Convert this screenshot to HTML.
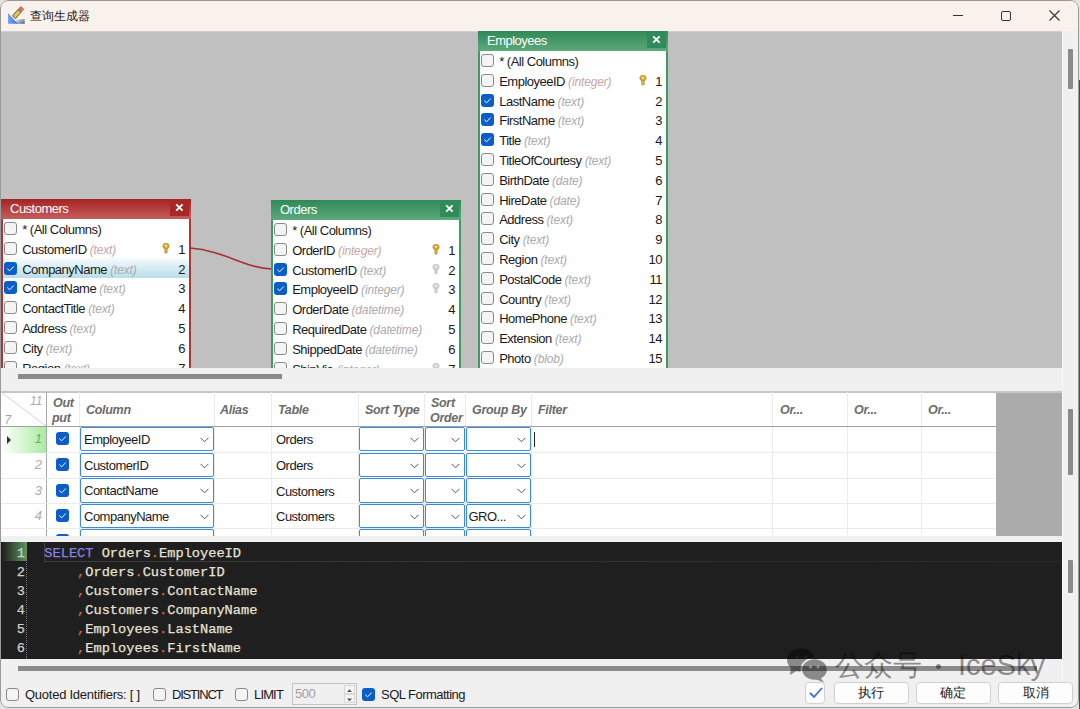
<!DOCTYPE html><html><head><meta charset="utf-8"><style>
*{margin:0;padding:0;box-sizing:border-box}
html,body{width:1080px;height:709px;overflow:hidden;background:#e4e4e4}
body{position:relative;font-family:"Liberation Sans", sans-serif;font-size:13px;letter-spacing:-0.5px;color:#1a1a1a}
.a{position:absolute}
.win{position:absolute;left:0;top:0;width:1079px;height:708px;background:#f0f0f0;border-radius:8px;overflow:hidden}
.wb{position:absolute;left:0;top:0;width:1079px;height:708px;border:1px solid #9a9a9a;border-radius:8px;pointer-events:none}
.title{position:absolute;left:0;top:0;width:1079px;height:31px;background:#f9f1eb}
.canvas{position:absolute;left:1px;top:31px;width:1061px;height:337px;background:#c0c0c0;overflow:hidden}
.tbl{position:absolute;width:190px;background:#fff;border:2px solid;border-top:none}
.th{position:absolute;left:0;top:0;right:0;height:19.5px;color:#fff;font-size:13px;line-height:20px;padding-left:9px}
.cls{position:absolute;right:0;top:0;width:19px;height:17px}
.row{position:absolute;left:0;right:0;height:19.8px;line-height:19.8px;white-space:nowrap}
.cb{position:absolute;width:13px;height:13px;border:1px solid #8a8a8a;border-radius:3px;background:#f4f4f4}
.cbk{position:absolute;width:13px;height:13px;border-radius:3px;background:#0b5ec8}
.ty{font-style:italic;color:#ababab;font-size:12px;letter-spacing:-0.15px}
.tyk{font-style:italic;color:#caa5a5;font-size:12px;letter-spacing:-0.15px}
.num{position:absolute;right:4px;top:0;text-align:right}
.key{position:absolute;top:5px;width:7px;height:11px}
.gh{position:absolute;font-weight:bold;font-style:italic;color:#6b6b6b;font-size:12.5px;letter-spacing:-0.3px}
.combo{position:absolute;border:1.5px solid #3d8ad6;border-radius:2px;background:#fff;height:24.5px}
.chev{position:absolute;right:4px;top:9px;width:9px;height:6px}
.gt{position:absolute;line-height:25px}
.code{position:absolute;font-family:"Liberation Mono", monospace;font-size:13.67px;letter-spacing:0;white-space:pre;line-height:19px;color:#e6e1d6;-webkit-text-stroke:0.25px currentColor}
.btn{position:absolute;top:682px;height:21.5px;background:#fdfdfd;border:1px solid #d0d0d0;border-radius:4px;text-align:center;line-height:20px;font-size:13px;letter-spacing:0;color:#1a1a1a}
</style></head><body><div class="win"><div class="title"><svg class="a" style="left:0;top:0" width="30" height="30" viewBox="0 0 30 30"><defs><linearGradient id="rg" x1="0" x2="1" y1="0" y2="1"><stop offset="0" stop-color="#f4f4f6"/><stop offset="1" stop-color="#4a5870"/></linearGradient><linearGradient id="bg1" x1="0" x2="1"><stop offset="0" stop-color="#7aa4f4"/><stop offset="1" stop-color="#3a70e0"/></linearGradient></defs><rect x="16" y="19" width="8.7" height="4.8" fill="url(#rg)"/><path d="M8 13 L8 23.8 L17.8 23.8 Z" fill="url(#bg1)"/><path d="M15.5 18.5 L12.5 15.9 L18.07 9.49 L21.09 12.13 Z" fill="#dcc860" stroke="#5a4a18" stroke-width="0.9" stroke-linejoin="round"/><path d="M18.07 9.49 L20.7 6.5 L23.7 9.1 L21.09 12.13 Z" fill="#d8735e" stroke="#8a4a3a" stroke-width="0.6"/></svg><div class="a" style="left:30px;top:7.5px;font-size:12.2px;letter-spacing:0;color:#1a1a1a">查询生成器</div><div class="a" style="left:953px;top:15px;width:10px;height:1px;background:#333"></div><div class="a" style="left:1001px;top:11px;width:10px;height:10px;border:1px solid #333;border-radius:2px"></div><svg class="a" style="left:1049px;top:10px" width="11" height="11" viewBox="0 0 11 11"><path d="M0.5 0.5 L10.5 10.5 M10.5 0.5 L0.5 10.5" stroke="#333" stroke-width="1.1"/></svg></div><div class="canvas"><div class="a" style="left:0;top:0;width:1061px;height:1px;background:#d2d0ce"></div><svg class="a" style="left:0;top:0" width="1061" height="337"><path d="M189 217 C 225 220, 240 236, 271 238" fill="none" stroke="#a83030" stroke-width="1.6"/></svg><div class="tbl" style="left:0px;top:168px;height:200px;border-color:#b13434"><div class="th" style="background:linear-gradient(#a62222,#c45e5e);left:-2px;right:-2px">Customers<div class="cls" style="background:#a82828;right:2px"><svg width="19" height="17" style="position:absolute;left:0;top:0"><path d="M6.2 5.3 L12.6 11.7 M12.6 5.3 L6.2 11.7" stroke="#fff" stroke-width="1.9"/></svg></div></div><div class="row" style="top:19.5px;"><div class="cb" style="left:0.5px;top:3.5px"></div><div class="a" style="left:19.2px;top:1.5px">* (All Columns)</div></div><div class="row" style="top:39.3px;"><div class="cb" style="left:0.5px;top:3.5px"></div><div class="a" style="left:19.2px;top:1.5px">CustomerID <span class="tyk">(text)</span></div><svg class="a" style="left:159.2px;top:4.6px" width="8" height="11" viewBox="0 0 8 11"><ellipse cx="4" cy="3" rx="3.2" ry="2.8" fill="#d9b23e" stroke="#a8801c" stroke-width="0.6"/><ellipse cx="4" cy="2.7" rx="1.1" ry="1" fill="#f2e2a0"/><path d="M2.7 5.4 L5.3 5.4 L5.3 9.6 L4 10.4 L2.7 9.6 Z" fill="#d9b23e" stroke="#a8801c" stroke-width="0.5"/></svg><div class="num" style="top:1.5px">1</div></div><div class="row" style="top:59.1px;background:linear-gradient(#f6fbfd,#b9dde9);"><div class="cbk" style="left:0.5px;top:3.5px"><svg width="13" height="13" viewBox="0 0 13 13" style="position:absolute;left:0;top:0"><path d="M3.3 6.6 L5.6 8.8 L9.7 4.5" fill="none" stroke="#fff" stroke-width="1"/></svg></div><div class="a" style="left:19.2px;top:1.5px">CompanyName <span class="ty">(text)</span></div><div class="num" style="top:1.5px">2</div></div><div class="row" style="top:78.9px;"><div class="cbk" style="left:0.5px;top:3.5px"><svg width="13" height="13" viewBox="0 0 13 13" style="position:absolute;left:0;top:0"><path d="M3.3 6.6 L5.6 8.8 L9.7 4.5" fill="none" stroke="#fff" stroke-width="1"/></svg></div><div class="a" style="left:19.2px;top:1.5px">ContactName <span class="ty">(text)</span></div><div class="num" style="top:1.5px">3</div></div><div class="row" style="top:98.7px;"><div class="cb" style="left:0.5px;top:3.5px"></div><div class="a" style="left:19.2px;top:1.5px">ContactTitle <span class="ty">(text)</span></div><div class="num" style="top:1.5px">4</div></div><div class="row" style="top:118.5px;"><div class="cb" style="left:0.5px;top:3.5px"></div><div class="a" style="left:19.2px;top:1.5px">Address <span class="ty">(text)</span></div><div class="num" style="top:1.5px">5</div></div><div class="row" style="top:138.3px;"><div class="cb" style="left:0.5px;top:3.5px"></div><div class="a" style="left:19.2px;top:1.5px">City <span class="ty">(text)</span></div><div class="num" style="top:1.5px">6</div></div><div class="row" style="top:158.1px;"><div class="cb" style="left:0.5px;top:3.5px"></div><div class="a" style="left:19.2px;top:1.5px">Region <span class="ty">(text)</span></div><div class="num" style="top:1.5px">7</div></div></div><div class="tbl" style="left:270px;top:169px;height:200px;border-color:#3f9a63"><div class="th" style="background:linear-gradient(#2f8a56,#5da97c);left:-2px;right:-2px">Orders<div class="cls" style="background:#2f8b58;right:2px"><svg width="19" height="17" style="position:absolute;left:0;top:0"><path d="M6.2 5.3 L12.6 11.7 M12.6 5.3 L6.2 11.7" stroke="#fff" stroke-width="1.9"/></svg></div></div><div class="row" style="top:19.5px;"><div class="cb" style="left:0.5px;top:3.5px"></div><div class="a" style="left:19.2px;top:1.5px">* (All Columns)</div></div><div class="row" style="top:39.3px;"><div class="cb" style="left:0.5px;top:3.5px"></div><div class="a" style="left:19.2px;top:1.5px">OrderID <span class="tyk">(integer)</span></div><svg class="a" style="left:159.2px;top:4.6px" width="8" height="11" viewBox="0 0 8 11"><ellipse cx="4" cy="3" rx="3.2" ry="2.8" fill="#d9b23e" stroke="#a8801c" stroke-width="0.6"/><ellipse cx="4" cy="2.7" rx="1.1" ry="1" fill="#f2e2a0"/><path d="M2.7 5.4 L5.3 5.4 L5.3 9.6 L4 10.4 L2.7 9.6 Z" fill="#d9b23e" stroke="#a8801c" stroke-width="0.5"/></svg><div class="num" style="top:1.5px">1</div></div><div class="row" style="top:59.1px;"><div class="cbk" style="left:0.5px;top:3.5px"><svg width="13" height="13" viewBox="0 0 13 13" style="position:absolute;left:0;top:0"><path d="M3.3 6.6 L5.6 8.8 L9.7 4.5" fill="none" stroke="#fff" stroke-width="1"/></svg></div><div class="a" style="left:19.2px;top:1.5px">CustomerID <span class="ty">(text)</span></div><svg class="a" style="left:159.2px;top:4.6px" width="8" height="11" viewBox="0 0 8 11"><ellipse cx="4" cy="3" rx="3.2" ry="2.8" fill="#d4d4d4" stroke="#bdbdbd" stroke-width="0.6"/><ellipse cx="4" cy="2.7" rx="1.1" ry="1" fill="#f0f0f0"/><path d="M2.7 5.4 L5.3 5.4 L5.3 9.6 L4 10.4 L2.7 9.6 Z" fill="#d4d4d4" stroke="#bdbdbd" stroke-width="0.5"/></svg><div class="num" style="top:1.5px">2</div></div><div class="row" style="top:78.9px;"><div class="cbk" style="left:0.5px;top:3.5px"><svg width="13" height="13" viewBox="0 0 13 13" style="position:absolute;left:0;top:0"><path d="M3.3 6.6 L5.6 8.8 L9.7 4.5" fill="none" stroke="#fff" stroke-width="1"/></svg></div><div class="a" style="left:19.2px;top:1.5px">EmployeeID <span class="ty">(integer)</span></div><svg class="a" style="left:159.2px;top:4.6px" width="8" height="11" viewBox="0 0 8 11"><ellipse cx="4" cy="3" rx="3.2" ry="2.8" fill="#d4d4d4" stroke="#bdbdbd" stroke-width="0.6"/><ellipse cx="4" cy="2.7" rx="1.1" ry="1" fill="#f0f0f0"/><path d="M2.7 5.4 L5.3 5.4 L5.3 9.6 L4 10.4 L2.7 9.6 Z" fill="#d4d4d4" stroke="#bdbdbd" stroke-width="0.5"/></svg><div class="num" style="top:1.5px">3</div></div><div class="row" style="top:98.7px;"><div class="cb" style="left:0.5px;top:3.5px"></div><div class="a" style="left:19.2px;top:1.5px">OrderDate <span class="ty">(datetime)</span></div><div class="num" style="top:1.5px">4</div></div><div class="row" style="top:118.5px;"><div class="cb" style="left:0.5px;top:3.5px"></div><div class="a" style="left:19.2px;top:1.5px">RequiredDate <span class="ty">(datetime)</span></div><div class="num" style="top:1.5px">5</div></div><div class="row" style="top:138.3px;"><div class="cb" style="left:0.5px;top:3.5px"></div><div class="a" style="left:19.2px;top:1.5px">ShippedDate <span class="ty">(datetime)</span></div><div class="num" style="top:1.5px">6</div></div><div class="row" style="top:158.1px;"><div class="cb" style="left:0.5px;top:3.5px"></div><div class="a" style="left:19.2px;top:1.5px">ShipVia <span class="ty">(integer)</span></div><svg class="a" style="left:159.2px;top:4.6px" width="8" height="11" viewBox="0 0 8 11"><ellipse cx="4" cy="3" rx="3.2" ry="2.8" fill="#d4d4d4" stroke="#bdbdbd" stroke-width="0.6"/><ellipse cx="4" cy="2.7" rx="1.1" ry="1" fill="#f0f0f0"/><path d="M2.7 5.4 L5.3 5.4 L5.3 9.6 L4 10.4 L2.7 9.6 Z" fill="#d4d4d4" stroke="#bdbdbd" stroke-width="0.5"/></svg><div class="num" style="top:1.5px">7</div></div></div><div class="tbl" style="left:477px;top:0px;height:340px;border-color:#3f9a63"><div class="th" style="background:linear-gradient(#2f8a56,#5da97c);left:-2px;right:-2px">Employees<div class="cls" style="background:#2f8b58;right:2px"><svg width="19" height="17" style="position:absolute;left:0;top:0"><path d="M6.2 5.3 L12.6 11.7 M12.6 5.3 L6.2 11.7" stroke="#fff" stroke-width="1.9"/></svg></div></div><div class="row" style="top:19.5px;"><div class="cb" style="left:0.5px;top:3.5px"></div><div class="a" style="left:19.2px;top:1.5px">* (All Columns)</div></div><div class="row" style="top:39.3px;"><div class="cb" style="left:0.5px;top:3.5px"></div><div class="a" style="left:19.2px;top:1.5px">EmployeeID <span class="tyk">(integer)</span></div><svg class="a" style="left:159.2px;top:4.6px" width="8" height="11" viewBox="0 0 8 11"><ellipse cx="4" cy="3" rx="3.2" ry="2.8" fill="#d9b23e" stroke="#a8801c" stroke-width="0.6"/><ellipse cx="4" cy="2.7" rx="1.1" ry="1" fill="#f2e2a0"/><path d="M2.7 5.4 L5.3 5.4 L5.3 9.6 L4 10.4 L2.7 9.6 Z" fill="#d9b23e" stroke="#a8801c" stroke-width="0.5"/></svg><div class="num" style="top:1.5px">1</div></div><div class="row" style="top:59.1px;"><div class="cbk" style="left:0.5px;top:3.5px"><svg width="13" height="13" viewBox="0 0 13 13" style="position:absolute;left:0;top:0"><path d="M3.3 6.6 L5.6 8.8 L9.7 4.5" fill="none" stroke="#fff" stroke-width="1"/></svg></div><div class="a" style="left:19.2px;top:1.5px">LastName <span class="ty">(text)</span></div><div class="num" style="top:1.5px">2</div></div><div class="row" style="top:78.9px;"><div class="cbk" style="left:0.5px;top:3.5px"><svg width="13" height="13" viewBox="0 0 13 13" style="position:absolute;left:0;top:0"><path d="M3.3 6.6 L5.6 8.8 L9.7 4.5" fill="none" stroke="#fff" stroke-width="1"/></svg></div><div class="a" style="left:19.2px;top:1.5px">FirstName <span class="ty">(text)</span></div><div class="num" style="top:1.5px">3</div></div><div class="row" style="top:98.7px;"><div class="cbk" style="left:0.5px;top:3.5px"><svg width="13" height="13" viewBox="0 0 13 13" style="position:absolute;left:0;top:0"><path d="M3.3 6.6 L5.6 8.8 L9.7 4.5" fill="none" stroke="#fff" stroke-width="1"/></svg></div><div class="a" style="left:19.2px;top:1.5px">Title <span class="ty">(text)</span></div><div class="num" style="top:1.5px">4</div></div><div class="row" style="top:118.5px;"><div class="cb" style="left:0.5px;top:3.5px"></div><div class="a" style="left:19.2px;top:1.5px">TitleOfCourtesy <span class="ty">(text)</span></div><div class="num" style="top:1.5px">5</div></div><div class="row" style="top:138.3px;"><div class="cb" style="left:0.5px;top:3.5px"></div><div class="a" style="left:19.2px;top:1.5px">BirthDate <span class="ty">(date)</span></div><div class="num" style="top:1.5px">6</div></div><div class="row" style="top:158.1px;"><div class="cb" style="left:0.5px;top:3.5px"></div><div class="a" style="left:19.2px;top:1.5px">HireDate <span class="ty">(date)</span></div><div class="num" style="top:1.5px">7</div></div><div class="row" style="top:177.9px;"><div class="cb" style="left:0.5px;top:3.5px"></div><div class="a" style="left:19.2px;top:1.5px">Address <span class="ty">(text)</span></div><div class="num" style="top:1.5px">8</div></div><div class="row" style="top:197.70000000000002px;"><div class="cb" style="left:0.5px;top:3.5px"></div><div class="a" style="left:19.2px;top:1.5px">City <span class="ty">(text)</span></div><div class="num" style="top:1.5px">9</div></div><div class="row" style="top:217.5px;"><div class="cb" style="left:0.5px;top:3.5px"></div><div class="a" style="left:19.2px;top:1.5px">Region <span class="ty">(text)</span></div><div class="num" style="top:1.5px">10</div></div><div class="row" style="top:237.3px;"><div class="cb" style="left:0.5px;top:3.5px"></div><div class="a" style="left:19.2px;top:1.5px">PostalCode <span class="ty">(text)</span></div><div class="num" style="top:1.5px">11</div></div><div class="row" style="top:257.1px;"><div class="cb" style="left:0.5px;top:3.5px"></div><div class="a" style="left:19.2px;top:1.5px">Country <span class="ty">(text)</span></div><div class="num" style="top:1.5px">12</div></div><div class="row" style="top:276.90000000000003px;"><div class="cb" style="left:0.5px;top:3.5px"></div><div class="a" style="left:19.2px;top:1.5px">HomePhone <span class="ty">(text)</span></div><div class="num" style="top:1.5px">13</div></div><div class="row" style="top:296.7px;"><div class="cb" style="left:0.5px;top:3.5px"></div><div class="a" style="left:19.2px;top:1.5px">Extension <span class="ty">(text)</span></div><div class="num" style="top:1.5px">14</div></div><div class="row" style="top:316.5px;"><div class="cb" style="left:0.5px;top:3.5px"></div><div class="a" style="left:19.2px;top:1.5px">Photo <span class="ty">(blob)</span></div><div class="num" style="top:1.5px">15</div></div></div></div><div class="a" style="left:1062px;top:31px;width:17px;height:650px;background:#f0f0f0;border-left:1px solid #fafafa"></div><div class="a" style="left:1068px;top:49px;width:5px;height:40px;background:#8a8a8a;border-radius:1px"></div><div class="a" style="left:1068px;top:409px;width:5px;height:66px;background:#8a8a8a;border-radius:1px"></div><div class="a" style="left:1068px;top:560px;width:5px;height:33px;background:#8a8a8a;border-radius:1px"></div><div class="a" style="left:18px;top:374px;width:264px;height:5px;background:#8a8a8a"></div><div class="a" style="left:1px;top:391px;width:1061px;height:145px;background:#ababab;border-top:2px solid #c6c6c6"></div><div class="a" style="left:1px;top:393px;width:995px;height:143px;background:#fff"></div><div class="a" style="left:46.2px;top:392px;width:1px;height:144px;background:#ececec"></div><div class="a" style="left:79.1px;top:392px;width:1px;height:144px;background:#ececec"></div><div class="a" style="left:213.5px;top:392px;width:1px;height:144px;background:#ececec"></div><div class="a" style="left:271.1px;top:392px;width:1px;height:144px;background:#ececec"></div><div class="a" style="left:358.1px;top:392px;width:1px;height:144px;background:#ececec"></div><div class="a" style="left:423.9px;top:392px;width:1px;height:144px;background:#ececec"></div><div class="a" style="left:465.1px;top:392px;width:1px;height:144px;background:#ececec"></div><div class="a" style="left:530.9px;top:392px;width:1px;height:144px;background:#ececec"></div><div class="a" style="left:771.9px;top:392px;width:1px;height:144px;background:#ececec"></div><div class="a" style="left:846.9px;top:392px;width:1px;height:144px;background:#ececec"></div><div class="a" style="left:921.0px;top:392px;width:1px;height:144px;background:#ececec"></div><div class="a" style="left:46px;top:392px;width:1px;height:144px;background:#a8a8a8"></div><div class="a" style="left:1px;top:426.2px;width:995px;height:1px;background:#a0a0a0"></div><div class="a" style="left:1px;top:452.4px;width:995px;height:1px;background:#ebebeb"></div><div class="a" style="left:1px;top:477.8px;width:995px;height:1px;background:#ebebeb"></div><div class="a" style="left:1px;top:503.2px;width:995px;height:1px;background:#ebebeb"></div><div class="a" style="left:1px;top:528.3px;width:995px;height:1px;background:#ebebeb"></div><svg class="a" style="left:1px;top:392px" width="46" height="35"><path d="M0 0 L45 34" stroke="#c8c8c8" stroke-width="0.8"/></svg><div class="a" style="left:30px;top:394px;font-style:italic;color:#aaa;font-size:12px;letter-spacing:0">11</div><div class="a" style="left:4.5px;top:413px;font-style:italic;color:#b0a090;font-size:12px;letter-spacing:0">7</div><div class="gh" style="left:53px;top:396px">Out</div><div class="gh" style="left:52px;top:411px">put</div><div class="gh" style="left:86px;top:403px">Column</div><div class="gh" style="left:220px;top:403px">Alias</div><div class="gh" style="left:278px;top:403px">Table</div><div class="gh" style="left:365px;top:403px">Sort Type</div><div class="gh" style="left:431px;top:396px">Sort</div><div class="gh" style="left:430px;top:411px">Order</div><div class="gh" style="left:472px;top:403px">Group By</div><div class="gh" style="left:538px;top:403px">Filter</div><div class="gh" style="left:780px;top:403px">Or...</div><div class="gh" style="left:854px;top:403px">Or...</div><div class="gh" style="left:928px;top:403px">Or...</div><div class="a" style="left:1px;top:427px;width:45px;height:25.5px;background:linear-gradient(90deg,#fff,#a8eca0)"></div><svg class="a" style="left:7px;top:436px" width="5" height="8"><path d="M0 0 L4 4 L0 8 Z" fill="#333"/></svg><div class="a" style="left:30px;top:426.2px;width:12px;text-align:right;font-style:italic;color:#6fa86f;line-height:25px;letter-spacing:0">1</div><div class="cbk" style="left:56px;top:432.2px"><svg width="13" height="13" viewBox="0 0 13 13" style="position:absolute;left:0;top:0"><path d="M3.3 6.6 L5.6 8.8 L9.7 4.5" fill="none" stroke="#fff" stroke-width="1"/></svg></div><div class="combo" style="left:80px;top:426.7px;width:133.5px"><svg class="chev" viewBox="0 0 9 6"><path d="M0.5 0.8 L4.5 4.8 L8.5 0.8" fill="none" stroke="#555" stroke-width="1"/></svg><div class="a" style="left:3px;top:1px;line-height:22px">EmployeeID</div></div><div class="gt" style="left:276px;top:427.2px">Orders</div><div class="combo" style="left:358.5px;top:426.7px;width:65px"><svg class="chev" viewBox="0 0 9 6"><path d="M0.5 0.8 L4.5 4.8 L8.5 0.8" fill="none" stroke="#555" stroke-width="1"/></svg></div><div class="combo" style="left:424.5px;top:426.7px;width:40.5px"><svg class="chev" viewBox="0 0 9 6"><path d="M0.5 0.8 L4.5 4.8 L8.5 0.8" fill="none" stroke="#555" stroke-width="1"/></svg></div><div class="combo" style="left:465.5px;top:426.7px;width:65px"><svg class="chev" viewBox="0 0 9 6"><path d="M0.5 0.8 L4.5 4.8 L8.5 0.8" fill="none" stroke="#555" stroke-width="1"/></svg><div class="a" style="left:2px;top:1px;line-height:22px"></div></div><div class="a" style="left:30px;top:452.4px;width:12px;text-align:right;font-style:italic;color:#aaa;line-height:25px;letter-spacing:0">2</div><div class="cbk" style="left:56px;top:458.4px"><svg width="13" height="13" viewBox="0 0 13 13" style="position:absolute;left:0;top:0"><path d="M3.3 6.6 L5.6 8.8 L9.7 4.5" fill="none" stroke="#fff" stroke-width="1"/></svg></div><div class="combo" style="left:80px;top:452.9px;width:133.5px"><svg class="chev" viewBox="0 0 9 6"><path d="M0.5 0.8 L4.5 4.8 L8.5 0.8" fill="none" stroke="#555" stroke-width="1"/></svg><div class="a" style="left:3px;top:1px;line-height:22px">CustomerID</div></div><div class="gt" style="left:276px;top:453.4px">Orders</div><div class="combo" style="left:358.5px;top:452.9px;width:65px"><svg class="chev" viewBox="0 0 9 6"><path d="M0.5 0.8 L4.5 4.8 L8.5 0.8" fill="none" stroke="#555" stroke-width="1"/></svg></div><div class="combo" style="left:424.5px;top:452.9px;width:40.5px"><svg class="chev" viewBox="0 0 9 6"><path d="M0.5 0.8 L4.5 4.8 L8.5 0.8" fill="none" stroke="#555" stroke-width="1"/></svg></div><div class="combo" style="left:465.5px;top:452.9px;width:65px"><svg class="chev" viewBox="0 0 9 6"><path d="M0.5 0.8 L4.5 4.8 L8.5 0.8" fill="none" stroke="#555" stroke-width="1"/></svg><div class="a" style="left:2px;top:1px;line-height:22px"></div></div><div class="a" style="left:30px;top:477.8px;width:12px;text-align:right;font-style:italic;color:#aaa;line-height:25px;letter-spacing:0">3</div><div class="cbk" style="left:56px;top:483.8px"><svg width="13" height="13" viewBox="0 0 13 13" style="position:absolute;left:0;top:0"><path d="M3.3 6.6 L5.6 8.8 L9.7 4.5" fill="none" stroke="#fff" stroke-width="1"/></svg></div><div class="combo" style="left:80px;top:478.3px;width:133.5px"><svg class="chev" viewBox="0 0 9 6"><path d="M0.5 0.8 L4.5 4.8 L8.5 0.8" fill="none" stroke="#555" stroke-width="1"/></svg><div class="a" style="left:3px;top:1px;line-height:22px">ContactName</div></div><div class="gt" style="left:276px;top:478.8px">Customers</div><div class="combo" style="left:358.5px;top:478.3px;width:65px"><svg class="chev" viewBox="0 0 9 6"><path d="M0.5 0.8 L4.5 4.8 L8.5 0.8" fill="none" stroke="#555" stroke-width="1"/></svg></div><div class="combo" style="left:424.5px;top:478.3px;width:40.5px"><svg class="chev" viewBox="0 0 9 6"><path d="M0.5 0.8 L4.5 4.8 L8.5 0.8" fill="none" stroke="#555" stroke-width="1"/></svg></div><div class="combo" style="left:465.5px;top:478.3px;width:65px"><svg class="chev" viewBox="0 0 9 6"><path d="M0.5 0.8 L4.5 4.8 L8.5 0.8" fill="none" stroke="#555" stroke-width="1"/></svg><div class="a" style="left:2px;top:1px;line-height:22px"></div></div><div class="a" style="left:30px;top:503.2px;width:12px;text-align:right;font-style:italic;color:#aaa;line-height:25px;letter-spacing:0">4</div><div class="cbk" style="left:56px;top:509.2px"><svg width="13" height="13" viewBox="0 0 13 13" style="position:absolute;left:0;top:0"><path d="M3.3 6.6 L5.6 8.8 L9.7 4.5" fill="none" stroke="#fff" stroke-width="1"/></svg></div><div class="combo" style="left:80px;top:503.7px;width:133.5px"><svg class="chev" viewBox="0 0 9 6"><path d="M0.5 0.8 L4.5 4.8 L8.5 0.8" fill="none" stroke="#555" stroke-width="1"/></svg><div class="a" style="left:3px;top:1px;line-height:22px">CompanyName</div></div><div class="gt" style="left:276px;top:504.2px">Customers</div><div class="combo" style="left:358.5px;top:503.7px;width:65px"><svg class="chev" viewBox="0 0 9 6"><path d="M0.5 0.8 L4.5 4.8 L8.5 0.8" fill="none" stroke="#555" stroke-width="1"/></svg></div><div class="combo" style="left:424.5px;top:503.7px;width:40.5px"><svg class="chev" viewBox="0 0 9 6"><path d="M0.5 0.8 L4.5 4.8 L8.5 0.8" fill="none" stroke="#555" stroke-width="1"/></svg></div><div class="combo" style="left:465.5px;top:503.7px;width:65px"><svg class="chev" viewBox="0 0 9 6"><path d="M0.5 0.8 L4.5 4.8 L8.5 0.8" fill="none" stroke="#555" stroke-width="1"/></svg><div class="a" style="left:2px;top:1px;line-height:22px">GRO...</div></div><div class="cbk" style="left:56px;top:534.3px"><svg width="13" height="13" viewBox="0 0 13 13" style="position:absolute;left:0;top:0"><path d="M3.3 6.6 L5.6 8.8 L9.7 4.5" fill="none" stroke="#fff" stroke-width="1"/></svg></div><div class="combo" style="left:80px;top:528.8px;width:133.5px"></div><div class="combo" style="left:358.5px;top:528.8px;width:65px"></div><div class="combo" style="left:424.5px;top:528.8px;width:40.5px"></div><div class="combo" style="left:465.5px;top:528.8px;width:65px"></div><div class="a" style="left:1px;top:535.5px;width:1061px;height:6.5px;background:#f0f0f0"></div><div class="a" style="left:534px;top:432px;width:1px;height:15px;background:#222"></div><div class="a" style="left:1px;top:542px;width:1061px;height:117px;background:#1f1f1f;overflow:hidden"><div class="a" style="left:1px;top:0;width:25px;height:19px;background:linear-gradient(90deg,#1f1f1f,#5a9a5a)"></div><div class="a" style="left:25px;top:0;width:1px;height:117px;border-left:1px dotted #777"></div><div class="a" style="left:43px;top:0;width:1px;height:19.5px;background:#3c3c3c"></div><div class="a" style="left:43px;top:18.5px;width:1020px;height:1px;background:linear-gradient(90deg,#3e3e3e,#333 40%,#282828)"></div><div class="code" style="left:0;top:1.5px;width:24px;text-align:right;color:#cfcfcf">1</div><div class="code" style="left:43.3px;top:1.5px"><span style="color:#8682e8">SELECT</span> Orders<span style="color:#e0603e">.</span>EmployeeID</div><div class="code" style="left:0;top:20.5px;width:24px;text-align:right;color:#cfcfcf">2</div><div class="code" style="left:43.3px;top:20.5px">    <span style="color:#e0603e">,</span>Orders<span style="color:#e0603e">.</span>CustomerID</div><div class="code" style="left:0;top:39.5px;width:24px;text-align:right;color:#cfcfcf">3</div><div class="code" style="left:43.3px;top:39.5px">    <span style="color:#e0603e">,</span>Customers<span style="color:#e0603e">.</span>ContactName</div><div class="code" style="left:0;top:58.5px;width:24px;text-align:right;color:#cfcfcf">4</div><div class="code" style="left:43.3px;top:58.5px">    <span style="color:#e0603e">,</span>Customers<span style="color:#e0603e">.</span>CompanyName</div><div class="code" style="left:0;top:77.5px;width:24px;text-align:right;color:#cfcfcf">5</div><div class="code" style="left:43.3px;top:77.5px">    <span style="color:#e0603e">,</span>Employees<span style="color:#e0603e">.</span>LastName</div><div class="code" style="left:0;top:96.5px;width:24px;text-align:right;color:#cfcfcf">6</div><div class="code" style="left:43.3px;top:96.5px">    <span style="color:#e0603e">,</span>Employees<span style="color:#e0603e">.</span>FirstName</div></div><div class="a" style="left:18px;top:666px;width:1019px;height:5px;background:#8a8a8a"></div><div class="cb" style="left:6px;top:688px"></div><div class="a" style="left:25px;top:686.8px;line-height:16px;letter-spacing:-0.25px">Quoted Identifiers: [ ]</div><div class="cb" style="left:153px;top:688px"></div><div class="a" style="left:172px;top:686.8px;line-height:16px;letter-spacing:-1.2px">DISTINCT</div><div class="cb" style="left:235px;top:688px"></div><div class="a" style="left:254px;top:686.8px;line-height:16px;letter-spacing:-0.85px">LIMIT</div><div class="a" style="left:292px;top:682.5px;width:64.5px;height:22px;border:1px solid #c4c4c4;background:#f0f0f0"><div class="a" style="left:2px;top:2px;color:#a0a0a0;line-height:16px">500</div><div class="a" style="left:51px;top:1px;width:11px;height:9px;border:1px solid #d8d8d8;background:#f4f4f4"></div><div class="a" style="left:51px;top:10px;width:11px;height:9px;border:1px solid #d8d8d8;background:#f4f4f4"></div><svg class="a" style="left:52px;top:2px" width="9" height="18"><path d="M2 6 L4.5 3.2 L7 6 Z M2 12.5 L4.5 15.3 L7 12.5 Z" fill="#555"/></svg></div><div class="cbk" style="left:362px;top:688px"><svg width="13" height="13" viewBox="0 0 13 13" style="position:absolute;left:0;top:0"><path d="M3.3 6.6 L5.6 8.8 L9.7 4.5" fill="none" stroke="#fff" stroke-width="1"/></svg></div><div class="a" style="left:381px;top:686.8px;line-height:16px;letter-spacing:-0.52px">SQL Formatting</div><div class="btn" style="left:805px;width:20px"><svg width="14" height="12" style="position:absolute;left:3px;top:4px"><path d="M1 6 L5 10 L13 1" fill="none" stroke="#3a72d8" stroke-width="1.8"/></svg></div><div class="btn" style="left:833.5px;width:75px">执行</div><div class="btn" style="left:915.5px;width:75px">确定</div><div class="btn" style="left:998px;width:75px">取消</div><svg class="a" style="left:786px;top:647px;opacity:0.42" width="44" height="38" viewBox="0 0 44 38"><defs><mask id="m1"><rect width="44" height="38" fill="#fff"/><ellipse cx="28.5" cy="22.5" rx="14" ry="12" fill="#000"/><circle cx="11" cy="10" r="1.6" fill="#000"/><circle cx="20" cy="10" r="1.6" fill="#000"/></mask><mask id="m2"><rect width="44" height="38" fill="#fff"/><circle cx="24.5" cy="20" r="1.5" fill="#000"/><circle cx="32" cy="20" r="1.5" fill="#000"/></mask></defs><g mask="url(#m1)"><ellipse cx="15" cy="13" rx="14" ry="11.5" fill="#000"/><path d="M5 20 L4 28 L12 23 Z" fill="#000"/></g><g mask="url(#m2)"><ellipse cx="28.5" cy="22.5" rx="12.3" ry="10.3" fill="#000"/><path d="M34 30 L38 35.5 L29 32 Z" fill="#000"/></g></svg><div class="a" style="left:835px;top:647px;font-size:29px;letter-spacing:0;color:rgba(0,0,0,0.42);line-height:36px;white-space:nowrap">公众号</div><div class="a" style="left:935.5px;top:663.5px;width:5px;height:5px;border-radius:50%;background:rgba(0,0,0,0.42)"></div><div class="a" style="left:958px;top:647px;font-size:29px;letter-spacing:0;color:rgba(0,0,0,0.42);line-height:36px;white-space:nowrap">IceSky</div><div class="wb"></div></div><div class="a" style="left:1079px;top:80px;width:1px;height:629px;background:#4a4a4a"></div><div></div></body></html>
